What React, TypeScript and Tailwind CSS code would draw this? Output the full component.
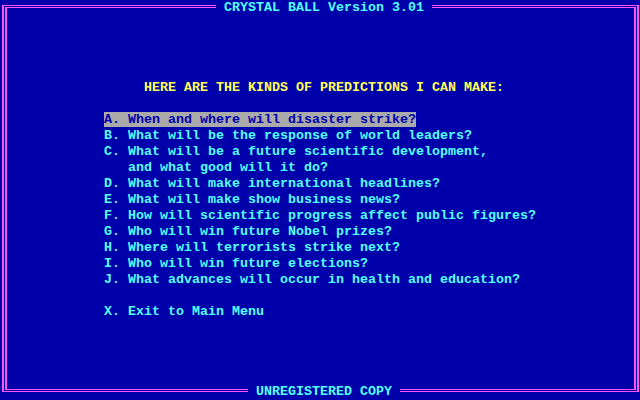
import React from 'react';

const options: string[] = [
  'B. What will be the response of world leaders?',
  'C. What will be a future scientific development,',
  '   and what good will it do?',
  'D. What will make international headlines?',
  'E. What will make show business news?',
  'F. How will scientific progress affect public figures?',
  'G. Who will win future Nobel prizes?',
  'H. Where will terrorists strike next?',
  'I. Who will win future elections?',
  'J. What advances will occur in health and education?',
];

function Row({ children, className = '' }: { children?: React.ReactNode; className?: string }) {
  return <div className={`h-4 leading-4 whitespace-pre ${className}`}>{children}</div>;
}

export default function App() {
  return (
    <div
      className="relative w-[640px] h-[400px] bg-[#0000aa] overflow-hidden text-[13.333px] font-bold text-[#55ffff]"
      style={{ fontFamily: '"Liberation Mono", "DejaVu Sans Mono", monospace' }}
    >
      {/* double line frame */}
      <div className="absolute left-[2px] top-[5px] w-[637px] h-[387px] border-x-2 border-y border-[#ff55ff] p-[1px]">
        <div className="w-full h-full border-x-2 border-y border-[#ff55ff]" />
      </div>

      <div className="relative flex flex-col">
        <Row>
          <span className="ml-[216px] bg-[#0000aa]"> CRYSTAL BALL Version 3.01 </span>
        </Row>
        <Row />
        <Row />
        <Row />
        <Row />
        <Row className="pl-[144px] text-[#ffff55]">HERE ARE THE KINDS OF PREDICTIONS I CAN MAKE:</Row>
        <Row />
        <Row className="pl-[104px]">
          <span className="bg-[#aaaaaa] text-[#0000aa]">A. When and where will disaster strike?</span>
        </Row>
        {options.map((line) => (
          <Row key={line} className="pl-[104px]">{line}</Row>
        ))}
        <Row />
        <Row className="pl-[104px]">X. Exit to Main Menu</Row>
        <Row />
        <Row />
        <Row />
        <Row />
        <Row>
          <span className="ml-[248px] bg-[#0000aa]"> UNREGISTERED COPY </span>
        </Row>
      </div>
    </div>
  );
}
